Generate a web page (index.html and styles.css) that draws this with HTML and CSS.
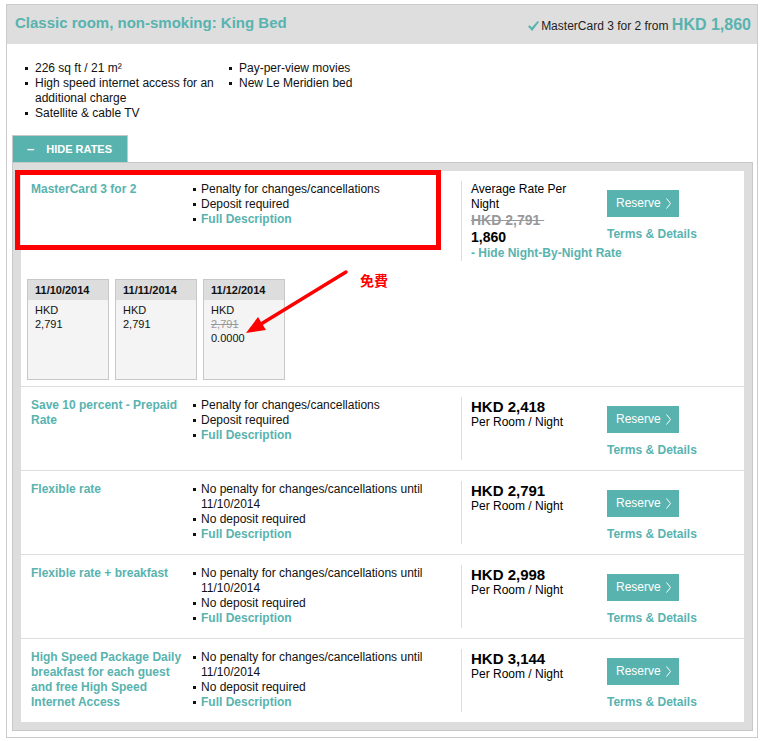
FILE: index.html
```html
<!DOCTYPE html>
<html lang="en">
<head>
	<meta charset="UTF-8">
	<title>Classic room, non-smoking: King Bed</title>
	<link rel="stylesheet" href="styles.css">
</head>
<body>
<div class="page">
	<!-- 房型外框 -->
	<div class="box">
		<div class="room-head">
			<h2>Classic room, non-smoking: King Bed</h2>
			<div class="from">
				<svg class="check" width="11" height="10" viewBox="0 0 11 10"><path d="M0 5.6 L1.6 4.2 L3.9 6.6 L9.6 0 L11 1.1 L4.1 10 Z" fill="#58b3af"/></svg>MasterCard 3 for 2 from <b>HKD 1,860</b>
			</div>
		</div>

		<div class="amenities">
			<ul class="dots am1">
				<li>226 sq ft / 21 m²</li>
				<li>High speed internet access for an additional charge</li>
				<li>Satellite &amp; cable TV</li>
			</ul>
			<ul class="dots">
				<li>Pay-per-view movies</li>
				<li>New Le Meridien bed</li>
			</ul>
		</div>

		<div class="rates">
			<div class="tab"><span class="minus">&ndash;</span>HIDE RATES</div>
			<div class="rates-box">
				<div class="rates-list">

					<div class="rate">
						<div class="rate-main">
							<div class="rate-name">MasterCard 3 for 2</div>
							<ul class="dots rate-desc">
								<li>Penalty for changes/cancellations</li>
								<li>Deposit required</li>
								<li><a href="#">Full Description</a></li>
							</ul>
							<div class="rate-price">
								<div>Average Rate Per Night</div>
								<div class="was">HKD 2,791&nbsp;</div>
								<div class="now">1,860</div>
								<a class="hide-link" href="#">- Hide Night-By-Night Rate</a>
							</div>
							<div class="rate-act">
								<a class="btn" href="#">Reserve<svg width="5" height="11" viewBox="0 0 5 11"><polyline points="0.5,0.5 4.5,5.5 0.5,10.5" fill="none" stroke="#fff" stroke-width="1"/></svg></a>
								<a class="terms" href="#">Terms &amp; Details</a>
							</div>
						</div>
						<!-- 逐晚房价 -->
						<div class="nights">
							<div class="night">
								<h4>11/10/2014</h4>
								<p>HKD<br>2,791</p>
							</div>
							<div class="night">
								<h4>11/11/2014</h4>
								<p>HKD<br>2,791</p>
							</div>
							<div class="night">
								<h4>11/12/2014</h4>
								<p>HKD<br><s>2,791</s><br>0.0000</p>
							</div>
						</div>
					</div>

					<div class="rate">
						<div class="rate-main">
							<div class="rate-name">Save 10 percent - Prepaid Rate</div>
							<ul class="dots rate-desc">
								<li>Penalty for changes/cancellations</li>
								<li>Deposit required</li>
								<li><a href="#">Full Description</a></li>
							</ul>
							<div class="rate-price">
								<div class="amount">HKD 2,418</div>
								<div>Per Room / Night</div>
							</div>
							<div class="rate-act">
								<a class="btn" href="#">Reserve<svg width="5" height="11" viewBox="0 0 5 11"><polyline points="0.5,0.5 4.5,5.5 0.5,10.5" fill="none" stroke="#fff" stroke-width="1"/></svg></a>
								<a class="terms" href="#">Terms &amp; Details</a>
							</div>
						</div>
					</div>

					<div class="rate">
						<div class="rate-main">
							<div class="rate-name">Flexible rate</div>
							<ul class="dots rate-desc">
								<li>No penalty for changes/cancellations until 11/10/2014</li>
								<li>No deposit required</li>
								<li><a href="#">Full Description</a></li>
							</ul>
							<div class="rate-price">
								<div class="amount">HKD 2,791</div>
								<div>Per Room / Night</div>
							</div>
							<div class="rate-act">
								<a class="btn" href="#">Reserve<svg width="5" height="11" viewBox="0 0 5 11"><polyline points="0.5,0.5 4.5,5.5 0.5,10.5" fill="none" stroke="#fff" stroke-width="1"/></svg></a>
								<a class="terms" href="#">Terms &amp; Details</a>
							</div>
						</div>
					</div>

					<div class="rate">
						<div class="rate-main">
							<div class="rate-name">Flexible rate + breakfast</div>
							<ul class="dots rate-desc">
								<li>No penalty for changes/cancellations until 11/10/2014</li>
								<li>No deposit required</li>
								<li><a href="#">Full Description</a></li>
							</ul>
							<div class="rate-price">
								<div class="amount">HKD 2,998</div>
								<div>Per Room / Night</div>
							</div>
							<div class="rate-act">
								<a class="btn" href="#">Reserve<svg width="5" height="11" viewBox="0 0 5 11"><polyline points="0.5,0.5 4.5,5.5 0.5,10.5" fill="none" stroke="#fff" stroke-width="1"/></svg></a>
								<a class="terms" href="#">Terms &amp; Details</a>
							</div>
						</div>
					</div>

					<div class="rate">
						<div class="rate-main">
							<div class="rate-name">High Speed Package Daily breakfast for each guest and free High Speed Internet Access</div>
							<ul class="dots rate-desc">
								<li>No penalty for changes/cancellations until 11/10/2014</li>
								<li>No deposit required</li>
								<li><a href="#">Full Description</a></li>
							</ul>
							<div class="rate-price">
								<div class="amount">HKD 3,144</div>
								<div>Per Room / Night</div>
							</div>
							<div class="rate-act">
								<a class="btn" href="#">Reserve<svg width="5" height="11" viewBox="0 0 5 11"><polyline points="0.5,0.5 4.5,5.5 0.5,10.5" fill="none" stroke="#fff" stroke-width="1"/></svg></a>
								<a class="terms" href="#">Terms &amp; Details</a>
							</div>
						</div>
					</div>

				</div>
			</div>
		</div>
	</div>

	<!-- 截图上的红色标注 -->
	<div class="mark"></div>
	<svg class="arrow" width="765" height="741" viewBox="0 0 765 741">
		<line x1="346" y1="272" x2="261" y2="324" stroke="#f00" stroke-width="3.5" stroke-linecap="round"/>
		<polygon points="246,333 258,317 266,330" fill="#f00"/>
	</svg>
	<span class="free">免費</span>
</div>
</body>
</html>
```

FILE: styles.css
```css
*{
	margin: 0;
	padding: 0;
}
body{
	font-family: "Liberation Sans", Arial, sans-serif;
	font-size: 12px;
	line-height: 15px;
	color: #111;
	background: #fff;
}
ul{
	list-style: none;
}
a{
	color: #58b3af;
	font-weight: bold;
	text-decoration: none;
}
.page{
	position: relative;
	width: 765px;
	height: 741px;
	padding-top: 4px;
	box-sizing: border-box;
}
.box{
	width: 752px;
	margin-left: 6px;
	border: 1px solid #cbcbcb;
	box-sizing: border-box;
	padding-bottom: 6px;
}

/* 标题栏 */
.room-head{
	display: flex;
	justify-content: space-between;
	align-items: flex-start;
	height: 39px;
	box-sizing: border-box;
	padding: 9px 6px 0 8px;
	background: #dedede;
}
.room-head h2{
	font-size: 15px;
	line-height: 18px;
	color: #58b3af;
}
.from{
	line-height: 22px;
	color: #222;
}
.from b{
	font-size: 16px;
	color: #58b3af;
}
.check{
	vertical-align: -1px;
	margin-right: 2px;
}

/* 小圆点列表 */
.dots li{
	padding-left: 8px;
}
.dots li::before{
	content: "";
	display: inline-block;
	width: 3px;
	height: 3px;
	background: #111;
	vertical-align: middle;
	margin-left: -8px;
	margin-right: 5px;
}
.amenities{
	display: flex;
	padding: 17px 0 14px 18px;
}
.amenities li{
	padding-left: 10px;
}
.amenities li::before{
	margin-left: -10px;
	margin-right: 7px;
}
.am1{
	width: 204px;
}

/* 房价列表 */
.rates{
	margin: 0 4px 0 5px;
}
.tab{
	width: max-content;
	background: #58b3af;
	color: #fff;
	font-weight: bold;
	font-size: 11px;
	line-height: 26px;
	padding: 0 15px 0 14px;
	border: 1px solid #c8c8c8;
	border-bottom: 0;
}
.minus{
	font-size: 13px;
	margin-right: 12px;
}
.rates-box{
	border: 1px solid #c8c8c8;
	background: #dddddd;
	padding: 8px;
}
.rates-list{
	background: #fff;
}
.rate + .rate{
	border-top: 1px solid #dddddd;
}
.rate-main{
	display: flex;
	align-items: flex-start;
	padding: 10px 0 10px 10px;
}
.rate-name,
.rate-desc{
	padding-top: 1px;
}
.rate-name{
	width: 156px;
	font-weight: bold;
	color: #58b3af;
}
.rate-desc{
	width: 268px;
	padding-left: 6px;
}
.rate-price{
	width: 110px;
	min-height: 62px;
	padding: 1px 0 0 9px;
	border-left: 1px solid #dddddd;
	color: #000;
}
.amount{
	font-size: 15px;
	line-height: 17px;
	font-weight: bold;
}
.was{
	font-size: 14px;
	line-height: 17px;
	font-weight: bold;
	color: #999;
	text-decoration: line-through;
}
.now{
	font-size: 14px;
	line-height: 17px;
	font-weight: bold;
}
.hide-link{
	display: block;
	line-height: 15px;
	white-space: nowrap;
}
.rate-act{
	margin-left: 26px;
	padding-top: 9px;
}
.btn{
	display: flex;
	align-items: center;
	width: 72px;
	height: 27px;
	box-sizing: border-box;
	padding-left: 9px;
	background: #58b3af;
	color: #fff;
	font-weight: normal;
}
.btn svg{
	margin-left: 5px;
}
.terms{
	display: block;
	margin-top: 10px;
}

/* 逐晚价格卡片 */
.nights{
	display: flex;
	gap: 6px;
	padding: 8px 6px 6px;
}
.night{
	width: 82px;
	height: 101px;
	box-sizing: border-box;
	border: 1px solid #c8c8c8;
	background: #f4f4f4;
	font-size: 11px;
	line-height: 14px;
}
.night h4{
	height: 20px;
	line-height: 20px;
	padding-left: 7px;
	font-size: 11px;
	background: #dddddd;
	color: #111;
}
.night p{
	padding: 3px 7px;
}
.night s{
	color: #999;
}

/* 标注 */
.mark{
	position: absolute;
	left: 15px;
	top: 170px;
	width: 426px;
	height: 80px;
	box-sizing: border-box;
	border: 5px solid #f00;
}
.arrow{
	position: absolute;
	left: 0;
	top: 0;
	pointer-events: none;
}
.free{
	position: absolute;
	left: 360px;
	top: 272px;
	font-family: "Noto Sans CJK TC", "Noto Sans CJK SC", sans-serif;
	font-size: 14px;
	line-height: 16px;
	font-weight: bold;
	color: #f00;
}
```
